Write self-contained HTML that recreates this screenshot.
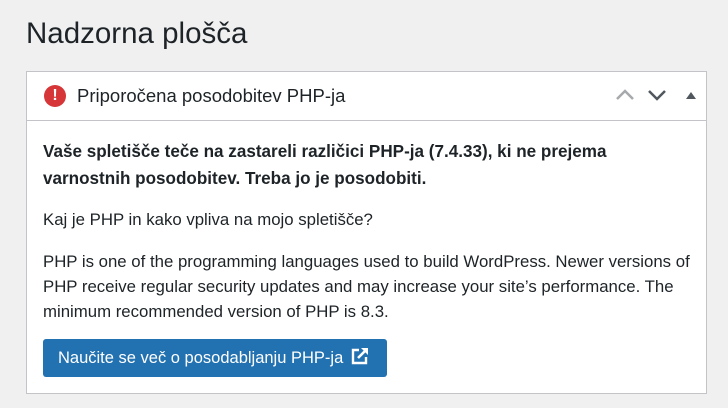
<!DOCTYPE html>
<html><head><meta charset="utf-8"><style>
body{margin:0;background:#f0f0f1;font-family:"Liberation Sans",sans-serif;color:#1d2327;width:728px;height:408px;overflow:hidden;position:relative}
h1{position:absolute;left:26px;top:14px;margin:0;font-size:29.5px;font-weight:400;line-height:40px}
.box{position:absolute;left:26px;top:71px;width:681px;height:323px;background:#fff;border:1px solid #c3c4c7;box-sizing:border-box}
.hd{height:48px;border-bottom:1px solid #c3c4c7;position:relative}
.hd .t{position:absolute;left:50px;top:13px;font-size:18.5px;line-height:22px}
.ic{position:absolute;left:17px;top:13px;width:22px;height:22px;border-radius:50%;background:#d63638;color:#fff;font-weight:700;font-size:16px;text-align:center;line-height:22px}
.p{position:absolute;left:16px;font-size:16.8px;line-height:25px;margin:0;white-space:nowrap}
.btn{position:absolute;left:16px;top:267px;width:344px;height:38px;background:#2271b1;border-radius:3px;color:#fff;font-size:16.5px;line-height:38px;padding-left:15px;box-sizing:border-box;white-space:nowrap}
</style></head><body>
<h1>Nadzorna plošča</h1>
<div class="box">
<div class="hd"><div class="ic">!</div><div class="t">Priporočena posodobitev PHP-ja</div>
<svg style="position:absolute;left:588px;top:16px" width="20" height="14"><path d="M2 11L10 3L18 11" stroke="#a7aaad" stroke-width="2.5" fill="none"/></svg>
<svg style="position:absolute;left:620px;top:16px" width="20" height="14"><path d="M2 3L10 11L18 3" stroke="#50575e" stroke-width="2.5" fill="none"/></svg>
<svg style="position:absolute;left:658px;top:18px" width="12" height="10"><path d="M1 9L6 2L11 9Z" fill="#50575e"/></svg>
</div>
<p class="p" style="top:66px;font-weight:700;line-height:27px;font-size:17.1px">Vaše spletišče teče na zastareli različici PHP-ja (7.4.33), ki ne prejema<br>varnostnih posodobitev. Treba jo je posodobiti.</p>
<p class="p" style="top:135px">Kaj je PHP in kako vpliva na mojo spletišče?</p>
<p class="p" style="top:177px">PHP is one of the programming languages used to build WordPress. Newer versions of<br>PHP receive regular security updates and may increase your site’s performance. The<br>minimum recommended version of PHP is 8.3.</p>
<div class="btn">Naučite se več o posodabljanju PHP-ja <svg width="18" height="18" viewBox="0 0 18 18" style="vertical-align:-2px;margin-left:3px"><path d="M8 3H2v13h13v-6" stroke="#fff" stroke-width="2.4" fill="none"/><path d="M10 1h7v7z" fill="#fff"/><path d="M7 11L15 3" stroke="#fff" stroke-width="2.6"/></svg></div>
</div>
</body></html>
